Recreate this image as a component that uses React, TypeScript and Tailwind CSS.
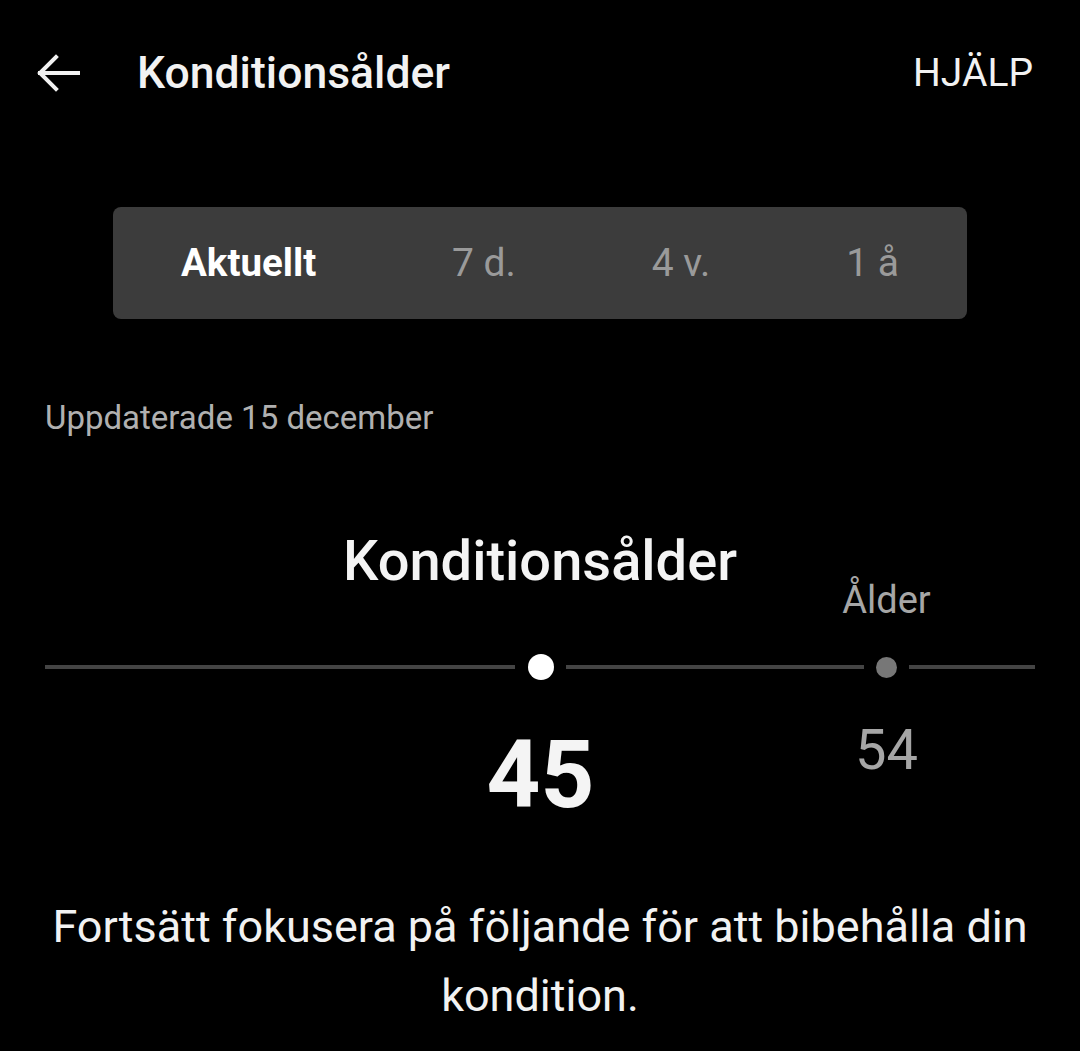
const tabs = ["Aktuellt", "7 d.", "4 v.", "1 å"];

export default function App() {
  return (
    <div className="min-h-[1051px] w-[1080px] bg-black text-white font-['Roboto',sans-serif]">
      <header className="flex h-[146px] items-center pl-[35px] pr-[47px]">
        <svg width="46" height="46" viewBox="0 0 46 46" fill="none" stroke="#f2f2f2" strokeWidth="4" strokeLinecap="square">
          <path d="M43 23H5" />
          <path d="M21 7L5 23l16 16" />
        </svg>
        <h1 className="ml-[56px] text-[44.5px] font-medium text-[#f2f2f2]">Konditionsålder</h1>
        <button className="ml-auto text-[39px] text-[#f2f2f2]">HJÄLP</button>
      </header>

      <div className="mx-[113px] mt-[61px] flex h-[112px] items-center justify-between rounded-[8px] bg-[#3c3c3c] px-[68px]">
        {tabs.map((t, i) => (
          <span
            key={t}
            className={i === 0 ? "text-[38.5px] font-bold text-white" : "text-[39px] text-[#9a9a9a]"}
          >
            {t}
          </span>
        ))}
      </div>

      <p className="ml-[45px] mt-[82px] text-[33px] leading-[33px] text-[#b0b0b0]">Uppdaterade 15 december</p>

      <div className="mt-[102px] px-[45px]">
        <h2 className="text-center text-[56px] font-medium leading-[50px] text-[#f4f4f4]">Konditionsålder</h2>
        <div className="grid grid-cols-[470px_51px_298px_45px_1fr]">
          <div className="col-start-4 -mt-[2px] flex justify-center whitespace-nowrap text-[38px] leading-[32px] text-[#a6a6a6]">
            Ålder
          </div>

          <div className="col-start-1 mt-[38px] flex h-[26px] items-center">
            <div className="h-[4px] w-full bg-[#444444]" />
          </div>
          <div className="mt-[38px] flex h-[26px] items-center justify-center">
            <div className="h-[26px] w-[26px] rounded-full bg-white" />
          </div>
          <div className="mt-[38px] flex h-[26px] items-center">
            <div className="h-[4px] w-full bg-[#444444]" />
          </div>
          <div className="mt-[38px] flex h-[26px] items-center justify-center">
            <div className="h-[21px] w-[21px] rounded-full bg-[#777777]" />
          </div>
          <div className="mt-[38px] flex h-[26px] items-center">
            <div className="h-[4px] w-full bg-[#444444]" />
          </div>

          <div className="col-start-2 mt-[48px] flex justify-center whitespace-nowrap text-[94px] font-bold leading-[94px] text-[#f4f4f4]">
            45
          </div>
          <div className="col-start-4 mt-[42px] flex justify-center self-start whitespace-nowrap text-[56px] leading-[56px] text-[#a6a6a6]">
            54
          </div>
        </div>
      </div>

      <p className="mx-[24px] mt-[70px] text-center text-[45px] leading-[69px] text-[#f2f2f2]">
        Fortsätt fokusera på följande för att bibehålla din kondition.
      </p>
    </div>
  );
}
